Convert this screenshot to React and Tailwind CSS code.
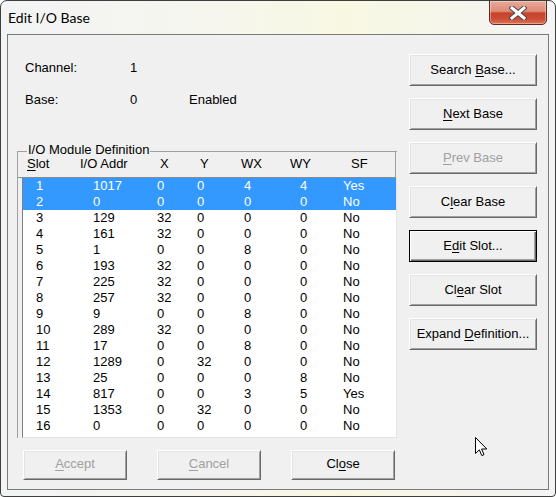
const rows = [
  ['1', '1017', '0', '0', '4', '4', 'Yes'],
  ['2', '0', '0', '0', '0', '0', 'No'],
  ['3', '129', '32', '0', '0', '0', 'No'],
  ['4', '161', '32', '0', '0', '0', 'No'],
  ['5', '1', '0', '0', '8', '0', 'No'],
  ['6', '193', '32', '0', '0', '0', 'No'],
  ['7', '225', '32', '0', '0', '0', 'No'],
  ['8', '257', '32', '0', '0', '0', 'No'],
  ['9', '9', '0', '0', '8', '0', 'No'],
  ['10', '289', '32', '0', '0', '0', 'No'],
  ['11', '17', '0', '0', '8', '0', 'No'],
  ['12', '1289', '0', '32', '0', '0', 'No'],
  ['13', '25', '0', '0', '0', '8', 'No'],
  ['14', '817', '0', '0', '3', '5', 'Yes'],
  ['15', '1353', '0', '32', '0', '0', 'No'],
  ['16', '0', '0', '0', '0', '0', 'No'],
];

const cellW = ['w-[57px]', 'w-[64px]', 'w-[40px]', 'w-[47px]', 'w-[56px]', 'w-[43px]', 'flex-1'];

function Btn({ pre = '', u, post = '', disabled, isDefault, className = 'h-[32px]' }) {
  const edge = isDefault
    ? 'border border-black shadow-[inset_1px_1px_0_#ffffff,inset_-1px_-1px_0_#696969,inset_-2px_-2px_0_#a0a0a0]'
    : 'border border-t-white border-l-white border-r-[#696969] border-b-[#696969] shadow-[inset_1px_1px_0_#e3e3e3,inset_-1px_-1px_0_#a0a0a0]';
  return (
    <button className={`bg-[#f0f0f0] flex items-center justify-center leading-[16px] ${edge} ${disabled ? 'text-[#a0a0a0]' : 'text-black'} ${className}`}>
      <span>{pre}<u className="underline-offset-[2px]">{u}</u>{post}</span>
    </button>
  );
}

export default function App() {
  return (
    <div className="w-[556px] h-[497px] relative flex flex-col border border-[#3f3f3f] rounded-t-[7px] rounded-b-[4px] overflow-hidden bg-[linear-gradient(90deg,#f3f4f5_0%,#f6f6ee_40%,#f8f8e2_62%,#f5f5ee_85%,#f3f4f4_100%)] font-['Liberation_Sans',Arial,sans-serif] text-[13px] text-black">
      {/* title bar */}
      <div className="h-[33px] pl-[7px] pt-[8px] font-['Lato',sans-serif] text-[14px] leading-[17px] text-black">Edit I/O Base</div>
      <div className="absolute top-[-1px] right-[8px] w-[58px] h-[25px] rounded-b-[5px] border border-[#5e2a22] bg-[linear-gradient(180deg,#e9ab9a_0%,#dc8a74_45%,#c6432d_52%,#cb4d35_78%,#de7558_100%)] shadow-[inset_0_0_0_1px_rgba(255,255,255,0.35)] flex items-center justify-center">
        <svg width="18" height="14" viewBox="0 0 18 14">
          <path d="M3 2 L15 12 M15 2 L3 12" stroke="#4a4a4a" strokeWidth="5" strokeLinecap="square" />
          <path d="M3 2 L15 12 M15 2 L3 12" stroke="#ffffff" strokeWidth="3" strokeLinecap="square" />
        </svg>
      </div>

      {/* client area */}
      <div className="mx-[6px] h-[456px] border border-[#7a7a7a] bg-[#f0f0f0] flex">
        <div className="w-[394px] pl-[9px]">
          <div className="pt-[25px] pl-[8px] flex flex-col gap-[16px] leading-[16px]">
            <div className="flex h-[16px]">
              <span className="w-[105px]">Channel:</span>
              <span>1</span>
            </div>
            <div className="flex h-[16px]">
              <span className="w-[105px]">Base:</span>
              <span className="w-[59px]">0</span>
              <span>Enabled</span>
            </div>
          </div>

          <div className="relative mt-[43px] w-[380px] h-[287px] border-t border-l border-[#a0a0a0]">
            <span className="absolute top-[-10px] left-[9px] px-[1px] bg-[#f0f0f0] leading-[16px]">I/O Module Definition</span>
            <div className="w-[378px] h-[26px] pt-[4px] pl-[9px] flex leading-[16px] border-r border-r-[#a0a0a0] border-b border-b-[#8a8a8a]">
              <span className="w-[53px]"><u className="underline-offset-[2px]">S</u>lot</span>
              <span className="w-[80px]">I/O Addr</span>
              <span className="w-[40px]">X</span>
              <span className="w-[41px]">Y</span>
              <span className="w-[49px]">WX</span>
              <span className="w-[61px]">WY</span>
              <span>SF</span>
            </div>
            <div className="ml-[4px] w-[375px] h-[260px] bg-white border-l border-l-[#808080] border-r border-r-[#e3e3e3] border-b border-b-[#e3e3e3]">
              {rows.map((r, i) => (
                <div key={r[0]} className={`h-[16px] leading-[16px] pl-[13px] flex ${i < 2 ? 'bg-[#3399ff] text-white' : ''}`}>
                  {r.map((c, j) => (
                    <span key={j} className={cellW[j]}>{c}</span>
                  ))}
                </div>
              ))}
            </div>
          </div>

          <div className="mt-[12px] ml-[6px] flex gap-[30px]">
            <Btn u="A" post="ccept" disabled className="w-[104px] h-[30px] pb-[3px]" />
            <Btn u="C" post="ancel" disabled className="w-[104px] h-[30px] pb-[3px]" />
            <Btn pre="Cl" u="o" post="se" className="w-[104px] h-[30px] pb-[3px]" />
          </div>
        </div>

        <div className="pl-[7px] pt-[19px] flex flex-col gap-[12px]">
          <Btn pre="Search " u="B" post="ase..." className="w-[128px] h-[32px]" />
          <Btn u="N" post="ext Base" className="w-[128px] h-[32px]" />
          <Btn u="P" post="rev Base" disabled className="w-[128px] h-[32px]" />
          <Btn pre="C" u="l" post="ear Base" className="w-[128px] h-[32px]" />
          <Btn pre="E" u="d" post="it Slot..." isDefault className="w-[128px] h-[32px]" />
          <Btn pre="Cl" u="e" post="ar Slot" className="w-[128px] h-[32px]" />
          <Btn pre="Expand " u="D" post="efinition..." className="w-[128px] h-[32px]" />
        </div>
      </div>

      {/* mouse pointer */}
      <svg className="absolute left-[474px] top-[436px]" width="13" height="20" viewBox="0 0 13 20">
        <path d="M0.5 0.5 L0.5 16.5 L4.3 12.8 L6.8 18.6 L9 17.6 L6.6 12 L11.8 12 Z" fill="#ffffff" stroke="#000000" strokeWidth="1" strokeLinejoin="round" />
      </svg>
    </div>
  );
}
